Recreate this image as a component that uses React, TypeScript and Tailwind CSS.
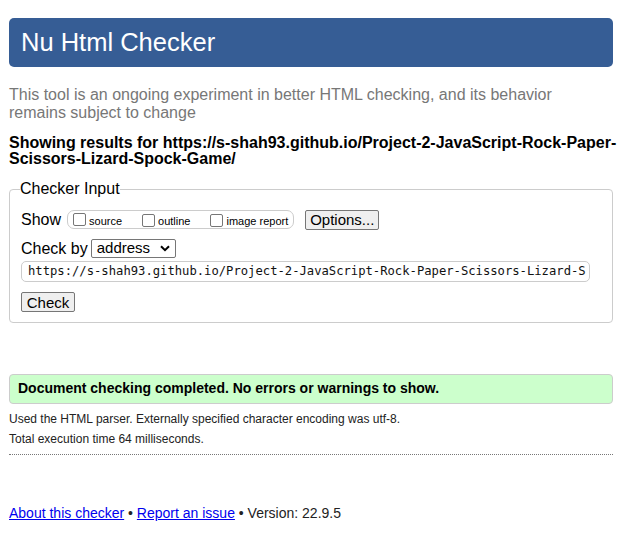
import React from "react";

export default function App() {
  return (
    <div className="w-[626px] min-h-[548px] bg-white text-black font-['Arial','Liberation_Sans',sans-serif]">
      <div className="pt-[18px] pl-[9px] w-[613px]">
        <h1 className="h-[49px] bg-[#365d95] rounded-[5px] text-white text-[25.5px] pl-[12px] flex items-center">
          Nu Html Checker
        </h1>
        <p className="mt-[19px] text-[#777777] text-[16px] leading-[18px]">
          This tool is an ongoing experiment in better HTML checking, and its behavior remains subject to change
        </p>
        <p className="mt-[13px] font-bold text-[16px] leading-[16px] whitespace-nowrap">
          Showing results for https://s-shah93.github.io/Project-2-JavaScript-Rock-Paper-
          <br />
          Scissors-Lizard-Spock-Game/
        </p>
        <fieldset className="mt-[10px] border border-[#cccccc] rounded-[4px] pl-[11px] pr-[11px] pb-[7px]">
          <legend className="-ml-[1px] px-0 text-[16px]">Checker Input</legend>
          <div className="mt-[8px] flex items-center h-[21px]">
            <span className="text-[16px] mr-[6px]">Show</span>
            <div className="flex items-center h-[19px] border border-[#cccccc] rounded-[7px] pl-[5px] pr-[5px] text-[11px]">
              <Box />
              <span className="ml-[3px] mt-[3px]">source</span>
              <span className="ml-[20px]"><Box /></span>
              <span className="ml-[3px] mt-[3px]">outline</span>
              <span className="ml-[20px]"><Box /></span>
              <span className="ml-[3px] mt-[3px]">image report</span>
            </div>
            <button className="ml-[11px] h-[20px] w-[74px] border border-[#767676] rounded-[2px] bg-[#efefef] text-[15px] leading-none">
              Options...
            </button>
          </div>
          <div className="mt-[9px] flex items-center h-[19px]">
            <span className="text-[16px] mr-[3px]">Check by</span>
            <div className="h-[19px] w-[85px] border border-[#767676] rounded-[2px] flex items-center justify-between pl-[5px] pr-[5px] text-[15px]">
              <span>address</span>
              <svg width="10" height="7" viewBox="0 0 10 7">
                <path d="M1 1.2 L5 5.2 L9 1.2" fill="none" stroke="#000" strokeWidth="2" />
              </svg>
            </div>
          </div>
          <div className="mt-[3px] h-[21px] w-[569px] border border-[#cccccc] rounded-[5px] flex items-center pl-[6px] overflow-hidden">
            <span className="font-['DejaVu_Sans_Mono',monospace] text-[12.2px] whitespace-nowrap text-[#111]">
              https://s-shah93.github.io/Project-2-JavaScript-Rock-Paper-Scissors-Lizard-S
            </span>
          </div>
          <button className="mt-[10px] h-[20px] w-[54px] border border-[#767676] rounded-[2px] bg-[#efefef] text-[15px] leading-none">
            Check
          </button>
        </fieldset>
        <div className="mt-[51px] h-[30px] border border-[#cccccc] rounded-[4px] bg-[#ccffcc] flex items-center pl-[8px] font-bold text-[14px]">
          Document checking completed. No errors or warnings to show.
        </div>
        <p className="mt-[8px] text-[12px] leading-[14px] text-[#222]">
          Used the HTML parser. Externally specified character encoding was utf-8.
        </p>
        <p className="mt-[6px] text-[12px] leading-[14px] text-[#222]">Total execution time 64 milliseconds.</p>
        <div className="mt-[8px] border-t border-dotted border-[#777777]" />
        <p className="mt-[50px] text-[14px] leading-[16px] text-[#222]">
          <a className="text-[#0000ee] underline" href="#">About this checker</a>
          {" \u2022 "}
          <a className="text-[#0000ee] underline" href="#">Report an issue</a>
          {" \u2022 Version: 22.9.5"}
        </p>
      </div>
    </div>
  );
}

function Box() {
  return <span className="inline-block w-[13px] h-[13px] border border-[#767676] rounded-[2px] bg-white align-middle" />;
}
